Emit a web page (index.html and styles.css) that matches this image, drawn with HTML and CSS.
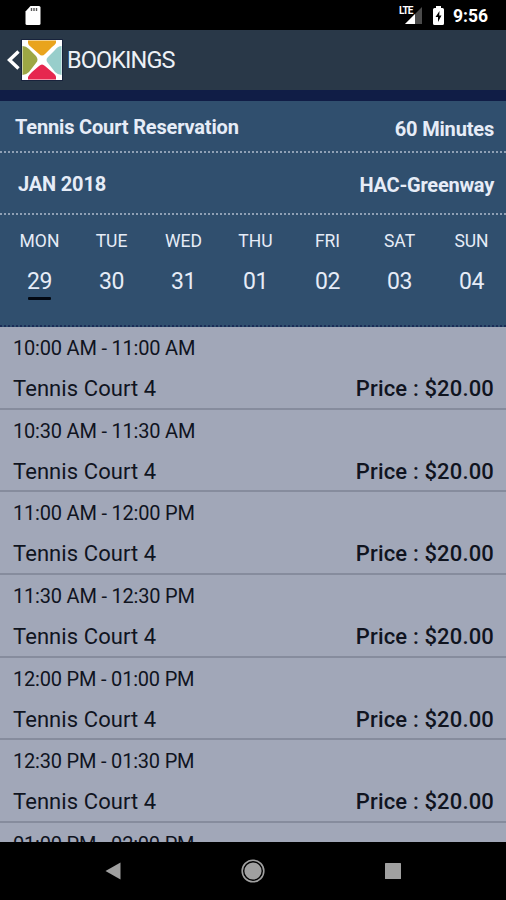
FILE: index.html
```html
<!DOCTYPE html>
<html lang="en">
<head>
<meta charset="utf-8">
<title>Bookings</title>
<link rel="stylesheet" href="styles.css">
</head>
<body>
<div class="screen">
  <div class="status">
    <svg class="sd" width="16" height="20" viewBox="0 0 16 20"><path d="M5.500 0H14Q15.500 0 15.500 1.500V17.500Q15.500 19 14 19H2Q.5 19 .5 17.500V5.500Z" fill="#fff"/><path d="M6.500 2V5M9 2V5M11.500 2V5" stroke="#555" stroke-width="1.400"/></svg>
    <div class="status-right">
      <span class="lte">LTE</span>
      <svg class="signal" width="19" height="18" viewBox="0 0 19 18"><path d="M18 0V17H1Z" fill="#4b4b4b"/><path d="M11 7V17H1Z" fill="#fff"/></svg>
      <svg class="battery" width="11" height="19" viewBox="0 0 11 19"><path d="M3 0H8V2H9.500Q11 2 11 3.500V17.500Q11 19 9.500 19H1.500Q0 19 0 17.500V3.500Q0 2 1.500 2H3Z" fill="#fff"/><path d="M6.500 5L2.500 11H5V16L8.500 9.500H6.200Z" fill="#000"/></svg>
      <span class="clock">9:56</span>
    </div>
  </div>
  <header class="appbar">
    <svg class="back" width="13" height="20" viewBox="0 0 13 20"><path d="M11.500 1.500L2.500 10L11.500 18.500" fill="none" stroke="#fff" stroke-width="3.400"/></svg>
    <svg class="logo" width="42" height="42" viewBox="0 0 42 42"><rect width="42" height="42" fill="#18233c"/><rect x="1" y="1" width="40" height="40" fill="#fff"/><path d="M7 1.500H35V4Q34 6 31 8L24 15Q21 18 18 15L10 8Q7 6 7 4Z" fill="#e9a41d"/><path d="M1.500 7Q5 7 8 10L15 17Q18 21 15 24L8 33Q5 36 1.500 36Z" fill="#9da744"/><path d="M40.500 7Q37 7 34 11L27 18Q24 21 27 24L34 33Q37 36 40.500 36Z" fill="#98cecb"/><path d="M7 40.500V38Q8 36 11 33L18 27Q21 24 24 27L31 33Q35 36 35 38V40.500Z" fill="#e6274f"/></svg>
    <h1>BOOKINGS</h1>
  </header>
  <section class="panel">
    <div class="line service"><span>Tennis Court Reservation</span><span class="duration">60 Minutes</span></div>
    <div class="line place"><span class="month">JAN 2018</span><span class="site">HAC-Greenway</span></div>
    <div class="week">
      <div class="day selected"><span>MON</span><b>29</b></div>
      <div class="day"><span>TUE</span><b>30</b></div>
      <div class="day"><span>WED</span><b>31</b></div>
      <div class="day"><span>THU</span><b>01</b></div>
      <div class="day"><span>FRI</span><b>02</b></div>
      <div class="day"><span>SAT</span><b>03</b></div>
      <div class="day"><span>SUN</span><b>04</b></div>
    </div>
  </section>
  <main class="slots">
    <article><p class="time">10:00 AM - 11:00 AM</p><p class="court"><span>Tennis Court 4</span><strong>Price : $20.00</strong></p></article>
    <article><p class="time">10:30 AM - 11:30 AM</p><p class="court"><span>Tennis Court 4</span><strong>Price : $20.00</strong></p></article>
    <article><p class="time">11:00 AM - 12:00 PM</p><p class="court"><span>Tennis Court 4</span><strong>Price : $20.00</strong></p></article>
    <article><p class="time">11:30 AM - 12:30 PM</p><p class="court"><span>Tennis Court 4</span><strong>Price : $20.00</strong></p></article>
    <article><p class="time">12:00 PM - 01:00 PM</p><p class="court"><span>Tennis Court 4</span><strong>Price : $20.00</strong></p></article>
    <article><p class="time">12:30 PM - 01:30 PM</p><p class="court"><span>Tennis Court 4</span><strong>Price : $20.00</strong></p></article>
    <article><p class="time">01:00 PM - 02:00 PM</p></article>
  </main>
  <nav class="navbar">
    <svg width="16" height="18" viewBox="0 0 16 18"><path d="M15.500 .5V17.500L.5 9Z" fill="#a0a0a0"/></svg>
    <svg width="24" height="24" viewBox="0 0 24 24"><circle cx="12" cy="12" r="10.800" fill="none" stroke="#a0a0a0" stroke-width="1.600"/><circle cx="12" cy="12" r="8.600" fill="#a0a0a0"/></svg>
    <svg width="16" height="16" viewBox="0 0 16 16"><rect width="16" height="16" rx=".5" fill="#a0a0a0"/></svg>
  </nav>
</div>
</body>
</html>
```

FILE: styles.css
```css
* { box-sizing: border-box; }
body { margin: 0; background: #000; font-family: Roboto, "Liberation Sans", sans-serif; }
p, h1 { margin: 0; }
svg { display: block; flex: none; }
.screen { width: 506px; height: 900px; display: flex; flex-direction: column; overflow: hidden; }

.status { height: 30px; flex: none; display: flex; justify-content: space-between; padding: 0 18px 0 25px; color: #fff; background: #000; }
.sd { margin-top: 6px; }
.status-right { display: flex; }
.lte { font-size: 10px; font-weight: 700; line-height: 10px; margin-top: 6px; letter-spacing: -.9px; width: 5px; white-space: nowrap; }
.signal { margin-top: 7px; }
.battery { margin: 6px 9px 0 10px; }
.clock { font-size: 17.500px; font-weight: 700; line-height: 32px; width: 35px; white-space: nowrap; }

.appbar { height: 71px; flex: none; display: flex; align-items: center; padding-left: 7px; background: #293848; border-bottom: 11px solid #101d46; }
.logo { margin-left: 1px; }
h1 { margin-left: 4px; font-size: 23.500px; font-weight: 400; color: #edf1f6; line-height: 60px; letter-spacing: -.9px; }

.panel { height: 226px; flex: none; background: #304f6e; color: #e6ecf7; }
.line { display: flex; justify-content: space-between; padding: 0 12px 0 15px; font-size: 20px; font-weight: 700; letter-spacing: -.17px; border-bottom: 2px dotted #8fa0b5; }
.service { height: 52px; line-height: 52px; }
.duration { line-height: 56px; }
.place { height: 62px; line-height: 62px; padding-left: 18px; }
.site { line-height: 65px; letter-spacing: -.25px; }
.week { height: 112px; display: grid; grid-template-columns: repeat(7, 72px); padding-left: 3.500px; border-bottom: 2px dotted #1b2d57; }
.day { display: flex; flex-direction: column; align-items: center; padding-top: 16px; }
.day span { font-size: 17.500px; line-height: 20px; }
.day b { font-size: 23px; font-weight: 400; line-height: 28px; margin-top: 17px; letter-spacing: -.4px; }
.selected::after { content: ""; width: 23px; height: 3px; margin-top: 1px; border-radius: 1px; background: #020812; }

.slots { flex: 1; min-height: 0; overflow: hidden; background: #a1a7b8; color: #10141f; }
article { height: 82.700px; padding: 1px 12px 0 13px; border-bottom: 2px solid #868c9d; }
.time { font-size: 20px; line-height: 41px; letter-spacing: -.2px; }
.court { display: flex; justify-content: space-between; font-size: 22px; line-height: 40.500px; letter-spacing: .08px; }
.court strong { font-weight: 500; letter-spacing: .15px; }

.navbar { height: 58px; flex: none; display: flex; align-items: center; justify-content: space-between; padding: 0 105px; background: #000; }
```
